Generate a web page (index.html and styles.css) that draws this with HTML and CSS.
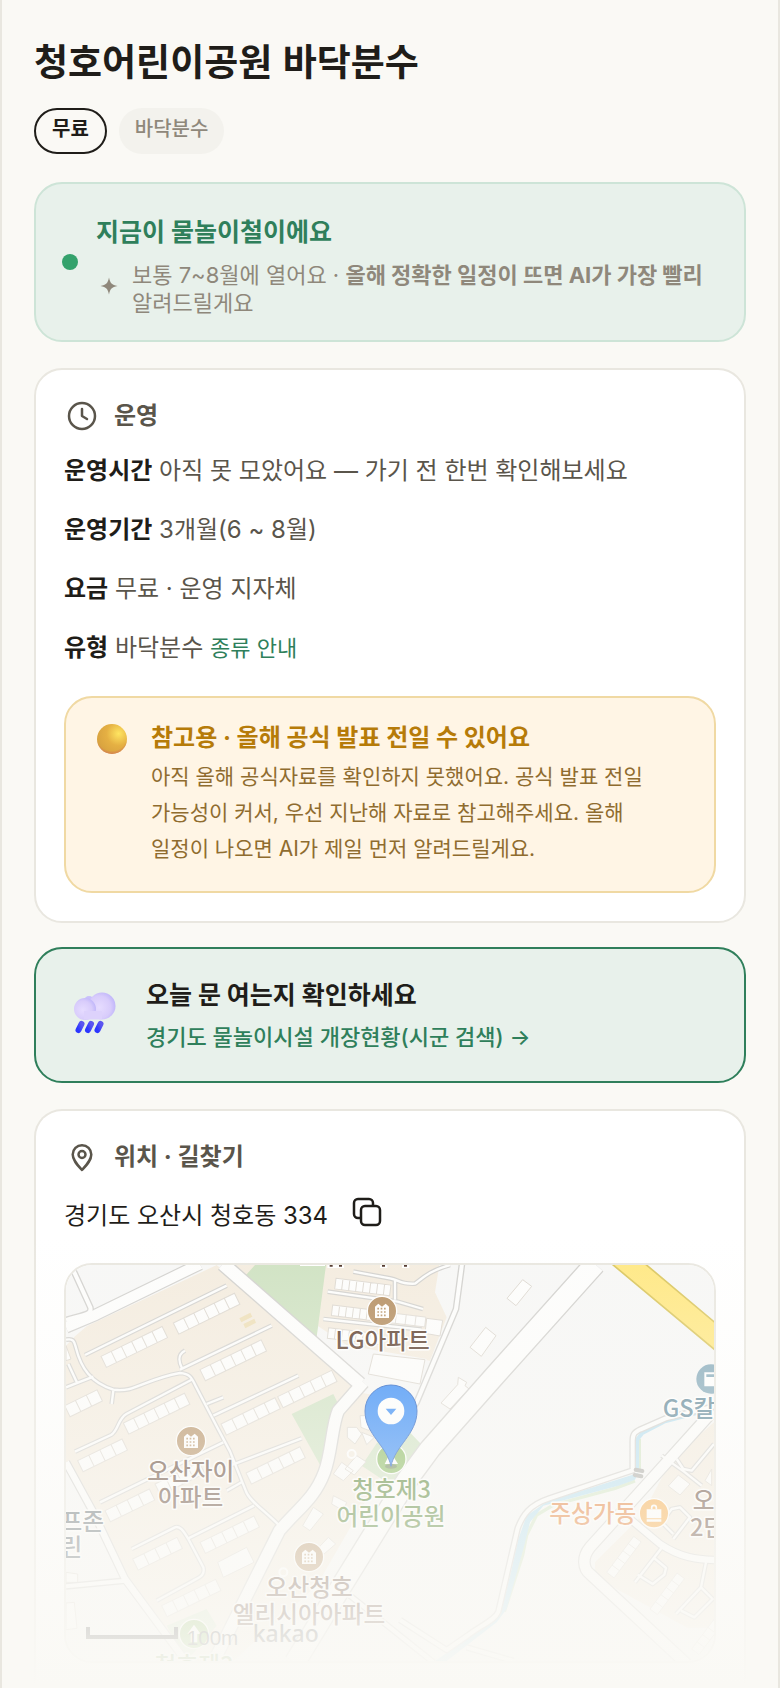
FILE: index.html
```html
<!DOCTYPE html>
<html lang="ko">
<head>
<meta charset="utf-8">
<meta name="viewport" content="width=device-width, initial-scale=1">
<title>청호어린이공원 바닥분수</title>
<link rel="stylesheet" href="styles.css">
</head>
<body>
<main class="page">
  <h1 class="title">청호어린이공원 바닥분수</h1>
  <div class="badges">
    <span class="badge badge-free">무료</span>
    <span class="badge badge-kind">바닥분수</span>
  </div>

  <section class="card status">
    <span class="status-dot"></span>
    <div class="status-body">
      <h2 class="status-title">지금이 물놀이철이에요</h2>
      <div class="status-note">
        <svg class="spark" viewBox="0 0 26 26" aria-hidden="true"><path d="M13 4.500c1.200 5.800 2.800 7.300 8.500 8.500-5.700 1.200-7.300 2.800-8.500 8.500-1.200-5.700-2.800-7.300-8.500-8.500 5.700-1.200 7.300-2.700 8.500-8.500z" fill="#8f887b"/></svg>
        <p class="status-text">보통 7~8월에 열어요 · <b>올해 정확한 일정이 뜨면 AI가 가장 빨리</b> 알려드릴게요</p>
      </div>
    </div>
  </section>

  <section class="card panel">
    <h2 class="panel-title">
      <svg class="icon" viewBox="0 0 36 36" fill="none" stroke="#5a554b" stroke-width="2.500" stroke-linecap="round" stroke-linejoin="round" aria-hidden="true"><circle cx="18" cy="18" r="13"/><path d="M18 11v7l5 3"/></svg>
      운영
    </h2>
    <div class="facts">
      <p><b>운영시간</b> 아직 못 모았어요 — 가기 전 한번 확인해보세요</p>
      <p><b>운영기간</b> 3개월(6 ~ 8월)</p>
      <p><b>요금</b> 무료 · 운영 지자체</p>
      <p><b>유형</b> 바닥분수 <a class="kind-link" href="#kinds">종류 안내</a></p>
    </div>
    <aside class="notice">
      <svg class="ball" viewBox="0 0 30 30" aria-hidden="true">
        <defs>
          <radialGradient id="ballFill" cx=".72" cy=".32" r=".8"><stop offset="0" stop-color="#ffe561"/><stop offset=".5" stop-color="#e5b043"/><stop offset="1" stop-color="#d6a03f"/></radialGradient>
          <radialGradient id="ballShade" cx=".5" cy=".38" r=".64"><stop offset=".8" stop-color="#d47a55" stop-opacity="0"/><stop offset="1" stop-color="#d47a55"/></radialGradient>
        </defs>
        <circle cx="15" cy="15" r="15" fill="url(#ballFill)"/><circle cx="15" cy="15" r="15" fill="url(#ballShade)"/>
      </svg>
      <div>
        <h3 class="notice-title">참고용 · 올해 공식 발표 전일 수 있어요</h3>
        <p class="notice-text">아직 올해 공식자료를 확인하지 못했어요. 공식 발표 전일 가능성이 커서, 우선 지난해 자료로 참고해주세요. 올해 일정이 나오면 AI가 제일 먼저 알려드릴게요.</p>
      </div>
    </aside>
  </section>

  <a class="card check" href="#status">
    <svg class="cloud" viewBox="0 0 48 48" aria-hidden="true">
      <defs>
        <radialGradient id="puff" cx=".4" cy=".55" r=".6"><stop offset="0" stop-color="#e6dcff"/><stop offset=".7" stop-color="#d8ccfb"/><stop offset="1" stop-color="#c2b8fa"/></radialGradient>
        <linearGradient id="drop" x1="0" y1="1" x2="1" y2="0"><stop offset="0" stop-color="#2b36ff"/><stop offset="1" stop-color="#5b55f0"/></linearGradient>
      </defs>
      <circle cx="17" cy="10" r="5" fill="#c9c0fb"/>
      <path d="M11 15h20v13H11z" fill="#d8ccfb"/>
      <circle cx="30" cy="15" r="13.500" fill="url(#puff)"/>
      <circle cx="13" cy="18" r="11" fill="url(#puff)"/>
      <path d="M12 20h18v8.500H12z" fill="#ddd2fc"/>
      <g stroke="url(#drop)" stroke-width="6" stroke-linecap="round"><path d="M9.500 33l-3 6"/><path d="M19 33l-3 6"/><path d="M28.500 33l-3 6"/></g>
    </svg>
    <span class="check-body">
      <strong class="check-title">오늘 문 여는지 확인하세요</strong>
      <span class="check-link">경기도 물놀이시설 개장현황(시군 검색) →</span>
    </span>
  </a>

  <section class="card panel place">
    <h2 class="panel-title">
      <svg class="icon" viewBox="0 0 36 36" fill="none" stroke="#5a554b" stroke-width="2.500" stroke-linejoin="round" aria-hidden="true"><path d="M18 31c-5-5.500-9.300-10-9.300-15.500a9.300 9.300 0 0 1 18.600 0C27.300 21 23 25.500 18 31z"/><circle cx="18" cy="15.500" r="3.500"/></svg>
      위치 · 길찾기
    </h2>
    <div class="address">
      <span>경기도 오산시 청호동 334</span>
      <button class="copy" type="button" aria-label="주소 복사"><svg viewBox="0 0 30 30" fill="none" stroke="#1f1d19" stroke-width="2.500" stroke-linejoin="round" aria-hidden="true"><rect x="9" y="9" width="19" height="19" rx="4"/><path d="M9 21H6a4 4 0 0 1-4-4V6a4 4 0 0 1 4-4h11a4 4 0 0 1 4 4v3"/></svg></button>
    </div>
    <div class="map">
      <svg class="map-canvas" viewBox="48 48 1944 1188" preserveAspectRatio="xMidYMid slice" role="img" aria-label="청호제3어린이공원 지도">
        <defs>
          <path id="b3" d="M0 0h108v37H0zM36 0v37M72 0v37"/>
          <path id="b4" d="M0 0h148v37H0zM37 0v37M74 0v37M111 0v37"/>
          <path id="b5" d="M0 0h180v37H0zM36 0v37M72 0v37M108 0v37M144 0v37"/>
          <path id="b6" d="M0 0h204v37H0zM34 0v37M68 0v37M102 0v37M136 0v37M170 0v37"/>
          <path id="b8" d="M0 0h166v32H0zM21 0v32M42 0v32M63 0v32M84 0v32M105 0v32M126 0v32M147 0v32"/>
          <g id="apt"><circle r="44" stroke="#fff" stroke-width="4"/><path fill="#fff" d="M-21-13l10-9 11 9 11-9 10 9v34h-42z"/><path stroke="#b89468" stroke-width="5" stroke-dasharray="5 5" d="M-14-7h30M-14 3h30M-14 13h30"/></g>
          <g id="lanes">
            <path d="M105 318L530 110M390 362L665 230M396 358c-12-25-12-42 9-53M490 500L745 380M470 465l50-20M75 608l108-50c22-12 20-48 46-63L425 392M190 425l-5 40M48 415l82-32M55 345l28 60M150 760L520 580M540 650l215-82M530 725l45-25"/>
            <path d="M48 272c25-5 25 8 30 25 15 60 45 105 112 125 65 10 90-30 200-50 30 2 35 15 45 35l65 125 40 75 48 120c10 30 60 60 102 105"/>
            <path d="M245 900l130-65c15-5 25 10 40 35l45 85c5 20-5 28-30 40L320 1055M415 868L612 770"/>
            <path d="M910 68l110 20c30 5 25 18 75 16 20-15 45-40 105-56M1035 92v60M833 128l210 30 76 22M820 210l295 32"/>
            <path d="M1880 630l20 30 25 5 67-80M1835 620l70 50 50 40M1840 890l-85 110M1810 925l38 32-5 20-35 28-45-28M1968 940l-15 75-75 80M1953 1015l35 35-55 55-40-20M1870 870l50-65-30-30-25 5-30 40 35 35"/>
          </g>
        </defs>
        <rect x="48" y="48" width="1944" height="1188" fill="#f7f7f6"/>
        <path fill="#f4ecdf" d="M75 262l35-30L500 48l425 355-70 90-30 160-130 190-200 393H400L225 990 48 650V290z"/>
        <path fill="#f4ecdf" d="M548 48h620l-13 82 35 75-50 130-240-40L560 70z"/>
        <path fill="#cfe2c2" d="M615 48h213l-28 217L588 78z"/>
        <path fill="#f4ecdf" d="M925 430l60 10 80 95-60 120L800 1010l-250 226h-40l180-400 110-130 40-150z"/>
        <path fill="#cfe2c2" d="M725 495l125-60 12 25-45 200zM1065 535l53 55-78 130-105-70 60-90zM350 1130l120-50 30 50-90 106z"/>
        <path fill="#f4ecdf" d="M1635 940l140-140 90-170 127-110v616h-80L1635 985z"/>
        <path fill="#f7f7f6" d="M900 290l230 40-40 110-110-15-70-60z"/>
        <g fill="#fdfdfc" stroke="#ddd8d0" stroke-width="3">
          <use href="#b6" transform="translate(370 222) rotate(-26)"/><use href="#b6" transform="translate(153 322) rotate(-26)"/><use href="#b6" transform="translate(450 362) rotate(-26)"/><use href="#b5" transform="translate(683 443) rotate(-26)"/><use href="#b5" transform="translate(513 525) rotate(-26)"/><use href="#b6" transform="translate(220 522) rotate(-26)"/><use href="#b3" transform="translate(44 470) rotate(-26)"/><use href="#b4" transform="translate(83 635) rotate(-26)"/><use href="#b5" transform="translate(588 672) rotate(-26)"/><use href="#b4" transform="translate(165 785) rotate(-26)"/><use href="#b4" transform="translate(315 705) rotate(-26)"/><use href="#b5" transform="translate(450 880) rotate(-26)"/><use href="#b4" transform="translate(248 930) rotate(-26)"/><use href="#b5" transform="translate(335 1070) rotate(-26)"/>
          <use href="#b8" transform="translate(858 88) rotate(7)"/><use href="#b8" transform="translate(848 168) rotate(7)"/><use href="#b4" transform="translate(1010 190) rotate(7) scale(.8)"/><use href="#b8" transform="translate(836 236) rotate(7)"/>
          <use href="#b5" transform="translate(1670 970) rotate(-53) scale(.75)"/><use href="#b5" transform="translate(1800 1080) rotate(-53) scale(.75)"/><use href="#b5" transform="translate(1925 1200) rotate(-53) scale(.75)"/>
          <path d="M503 940l87-45 22 45-92 45zM970 315l155 17-15 73-155-30zM1130 208l48 6-8 47-45-8zM1418 92l27 20-47 58-27-22zM1307 235l31 25-44 62-34-27zM1225 385l25 15-5 10 12 10-57 60-27-18 50-55zM892 535h28l15 20-20 30-23-20zM935 550l38 15-23 22zM930 500h28v45l-25-10zM920 620l28 18-35 40-28-18zM875 640l35 25-30 30-30-20zM790 775l30 20-40 50-22-15zM48 290l15 40-15 5zM850 740l40 20-10 25-35-20zM1885 678l35 27-30 33-35-27zM1985 660v50l-20-15zM835 865l22 20-35 30-20-15zM48 970l35 5v25H48zM48 1062l25-2 8 78-33 4z"/>
        </g>
        <g fill="none" stroke="#fff" stroke-width="6"><circle cx="905" cy="615" r="12"/><circle cx="700" cy="970" r="12"/></g>
        <path fill="#eedfb8" d="M568 208l33-17 6 12-33 17zM580 225l33-16 5 12-32 17z"/>
        <path fill="none" stroke="#d3e6c6" stroke-width="10" d="M1768 570v95M1755 696l-60 22-185 50-50 30-30 60-12 60-55 170"/>
        <path fill="none" stroke="#b5dff1" stroke-width="12" d="M1992 478l-150 40-65 34-16 20v95"/>
        <path fill="#b5dff1" d="M1765 672l-10 20-50 18-225 60-40 50-20 80-50 180-30 40-150 116h-35l145-100 50-36 35-140 20-90 25-70 60-42z"/>
        <g fill="none" stroke="#d2d1ce" stroke-linejoin="round">
          <g stroke-width="38"><path d="M48 235l90-38L450 45"/><path d="M1985 490l-180 200-185 205c-25 30-20 65 0 80l290 270"/></g>
          <path stroke-width="46" d="M519 45l411 360"/>
          <path stroke-width="42" d="M940 400l-75 85c-20 45-20 130-42 185-30 80-80 110-135 175L490 1240"/>
          <path stroke-width="68" d="M1635 45l-305 340-190 215-70 95-195 315-140 230"/>
          <path stroke-width="26" d="M1740 810l90 75c60 40 110 47 165 48M48 640l82 150 95 200 185 250"/>
          <path stroke-width="20" d="M1236 45l-18 135-118 280-60 90M48 1012l177-17M1992 472l-145 36-75 33c-20 10-24 15-24 35v88l-250 84c-60 20-80 50-95 90l-58 250c-10 25-50 40-90 70l-65 45-140-90M1250 1195l140 41M66 55l55 120c5 20-10 20-73 38M900 1040l250 200"/>
          <use href="#lanes" stroke-width="14"/>
        </g>
        <g fill="none" stroke="#fdfdfc" stroke-linejoin="round">
          <g stroke-width="31"><path d="M48 235l90-38L450 45"/><path d="M1985 490l-180 200-185 205c-25 30-20 65 0 80l290 270"/></g>
          <path stroke-width="38" d="M519 45l411 360"/>
          <path stroke-width="34" d="M940 400l-75 85c-20 45-20 130-42 185-30 80-80 110-135 175L490 1240"/>
          <path stroke-width="60" d="M1635 45l-305 340-190 215-70 95-195 315-140 230"/>
          <path stroke-width="19" d="M1740 810l90 75c60 40 110 47 165 48M48 640l82 150 95 200 185 250"/>
          <path stroke-width="12" d="M1236 45l-18 135-118 280-60 90M48 1012l177-17M1992 472l-145 36-75 33c-20 10-24 15-24 35v88l-250 84c-60 20-80 50-95 90l-58 250c-10 25-50 40-90 70l-65 45-140-90M1250 1195l140 41M66 55l55 120c5 20-10 20-73 38M900 1040l250 200"/>
          <use href="#lanes" stroke-width="7"/>
        </g>
        <path fill="none" stroke="#a9a9a5" stroke-width="12" stroke-linecap="round" d="M1757 662l20 4M1754 678l20 4"/>
        <path fill="#ffe883" stroke="#dac65f" stroke-width="5" d="M1680 40h100l220 185v82z"/>
        <path fill="#fff" d="M750 48h75v3h-75zM832 48h50v9h-50zM990 48h22v9h-22zM1056 48h22v9h-22z"/>
        <path fill="#4a2f24" d="M839 48h9v5h-9zM867 48h9v5h-9zM996 48h9v5h-9zM1062 48h9v5h-9z"/>

        <use href="#apt" x="996" y="186" fill="#b58f62"/>
        <use href="#apt" x="423" y="576" fill="#b58f62"/>
        <use href="#apt" x="777" y="924" fill="#b58f62"/>
        <g><circle cx="1983" cy="390" r="44" fill="#84a9ba"/><path d="M1963 370h29v42h-29z" fill="#fff"/><path d="M1969 376h23v8h-23z" fill="#84a9ba"/></g>
        <g transform="translate(1812 793)"><circle r="44" fill="#f8a63c" stroke="#fff" stroke-width="4"/><path fill="#fff" d="M-22-12h44v27h-44zM-22 18h44v7h-44z"/><path fill="none" stroke="#fff" stroke-width="5" d="M-7-12v-5a7 7 0 0 1 14 0v5"/></g>
        <circle cx="1024" cy="630" r="44" fill="#86b95c" stroke="#fff" stroke-width="4"/><path fill="#fff" d="M1004 645l18-35 22 35z"/>
        <circle cx="432" cy="1155" r="44" fill="#86b95c" stroke="#fff" stroke-width="4"/><path fill="#fff" d="M432 1127l20 28h-10v25h-20v-25h-10z"/>

        <g class="labels" text-anchor="middle">
          <g fill="#5e4131"><text x="998" y="300">LG아파트</text><text x="422" y="692">오산자이</text><text x="422" y="772">아파트</text><text x="778" y="1042">오산청호</text><text x="777" y="1121">엘리시아아파트</text></g>
          <g fill="#5e4131" text-anchor="start"><text x="1928" y="780">오산</text><text x="1920" y="860">2단지</text></g>
          <g fill="#5f6a70" text-anchor="end"><text x="162" y="842">골프존</text><text x="97" y="922">그린</text></g>
          <g fill="#4e7e2c"><text x="1025" y="748">청호제3</text><text x="1023" y="828">어린이공원</text><text x="432" y="1274">청호제3</text></g>
          <text x="1838" y="505" text-anchor="start" fill="#5f8799">GS칼텍스</text>
          <text x="1628" y="820" fill="#e2762a">주상가동</text>
        </g>
        <path fill="none" stroke="#333" stroke-width="12" d="M114 1134v30h264v-30"/>
        <text class="scale" x="410" y="1187">100m</text>
        <text class="brand" x="608" y="1180">kakao</text>

        <ellipse cx="1023" cy="652" rx="18" ry="7" fill="#555" opacity=".5"/>
        <path fill="#3088f8" stroke="#1c5cc4" stroke-width="3" d="M1023 652c-12-62-78-96-78-166a78 78 0 0 1 156 0c0 70-66 104-78 166z"/>
        <circle cx="1023" cy="486" r="40" fill="#fff"/><path fill="#3088f8" d="M1007 479h32l-16 19z"/>
      </svg>
    </div>
  </section>
  <div class="fade"></div>
</main>
</body>
</html>
```
FILE: styles.css
```css
* { box-sizing: border-box; }

body {
  margin: 0;
  background: #faf9f5;
  color: #1f1d19;
  font-family: Inter, "Noto Sans CJK KR", sans-serif;
  font-size: 24px;
  line-height: 36px;
  word-break: keep-all;
}

h1, h2, h3, p { margin: 0; }

.page {
  position: relative;
  min-height: 100vh;
  padding: 30px 32px 0;
  border: solid #e9e7e0;
  border-width: 0 2px;
  overflow: hidden;
}

.title { font-family: "Noto Sans CJK KR", sans-serif; font-size: 37px; line-height: 60px; font-weight: 700; }

.badges { display: flex; gap: 12px; margin: 18px 0 28px; }
.badge {
  padding: 7px 16px 11px;
  border-radius: 24px;
  font-size: 20px;
  line-height: 28px;
  font-weight: 500;
}
.badge-free { padding: 5px 16px 9px; border: 2px solid #1f1d19; font-weight: 700; }
.badge-kind { background: #f3f2ed; color: #8f887b; }

.card {
  margin-bottom: 26px;
  border: 2px solid #e9e7e0;
  border-radius: 28px;
  background: #fff;
}

.status {
  display: flex;
  align-items: center;
  gap: 18px;
  padding: 29px 26px 23px;
  border-color: #cde4d7;
  background: #e8f1eb;
}
.status-dot { flex: none; width: 16px; height: 16px; margin-bottom: 6px; border-radius: 50%; background: #34a26c; }
.status-title { color: #2f7f5b; font-size: 25px; line-height: 38px; font-weight: 700; }
.status-note { display: flex; align-items: center; gap: 10px; padding-top: 10px; }
.spark { flex: none; width: 26px; height: 26px; margin-bottom: 6px; }
.status-text { color: #8f887b; font-size: 22px; line-height: 28px; }

.panel { margin-bottom: 24px; padding: 28px; }
.panel-title {
  display: flex;
  align-items: center;
  gap: 14px;
  color: #5a554b;
  font-size: 24px;
  line-height: 36px;
  font-weight: 700;
}
.icon { width: 36px; height: 36px; }

.facts { display: grid; gap: 23px; padding: 19px 0 30px; color: #5a554b; }
.facts b { color: #1f1d19; }
.kind-link { color: #2f7f5b; font-size: 22px; text-decoration: none; }

.notice {
  display: flex;
  gap: 24px;
  padding: 22px 31px 24px;
  border: 2px solid #f0d9a3;
  border-radius: 28px;
  background: #fff5e5;
}
.ball { flex: none; width: 30px; height: 30px; margin-top: 4px; }
.notice-title { color: #b67b09; font-size: 24px; line-height: 36px; font-weight: 700; }
.notice-text { margin-top: 3px; color: #8f6c2f; font-size: 21px; line-height: 36px; }

.check {
  display: flex;
  align-items: center;
  gap: 26px;
  padding: 24px 36px;
  border-color: #2f7f5b;
  background: #e8f1eb;
  color: inherit;
  text-decoration: none;
}
.cloud { flex: none; width: 48px; height: 48px; }
.check-body { display: grid; }
.check-title { font-size: 25px; line-height: 44px; }
.check-link { color: #2f7f5b; font-size: 22px; line-height: 40px; font-weight: 500; }

.place { margin-bottom: 0; padding-bottom: 20px; border-bottom: 0; border-radius: 28px 28px 0 0; }
.address { display: flex; align-items: center; gap: 24px; padding: 22px 0 28px; }
.copy { display: flex; padding: 0 0 8px; border: 0; background: none; }
.copy svg { width: 30px; height: 30px; }

.map { border: 2px solid #e9e7e0; border-radius: 28px; overflow: hidden; }
.map-canvas { display: block; width: 100%; min-height: 396px; }
.labels { font-family: "Noto Sans CJK KR", sans-serif; font-size: 71px; font-weight: 500; paint-order: stroke; stroke: #fff; stroke-width: 9px; stroke-linejoin: round; }
.scale { font-family: "Liberation Sans", sans-serif; font-size: 62px; fill: #444; }
.brand { font-family: "Noto Sans", sans-serif; font-size: 69px; font-weight: 500; fill: #444; }

.fade {
  position: absolute;
  right: 0;
  bottom: 0;
  left: 0;
  height: 452px;
  background: linear-gradient(rgba(250, 249, 245, 0), #faf9f5);
  pointer-events: none;
}
```
